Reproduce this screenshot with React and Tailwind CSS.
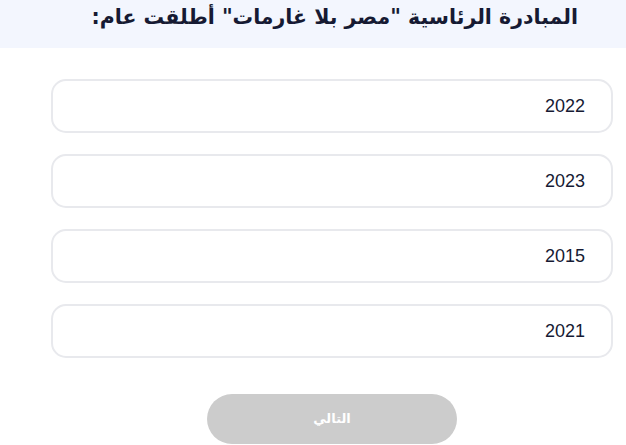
import React, { useState } from 'react';

const options = ['2022', '2023', '2015', '2021'];

const App = () => {
    const [selected, setSelected] = useState(null);

    return (
        <div dir="rtl" className="w-[626px] h-[445px] overflow-hidden bg-white">
            {/* Question */}
            <div className="h-[48px] bg-[#f3f6fe] pr-[48px] pt-[2px]">
                <h2 className="text-[20.5px] font-bold leading-[30px] text-[#161a33] font-['DejaVu_Sans',sans-serif]">
                    المبادرة الرئاسية "مصر بلا غارمات" أطلقت عام:
                </h2>
            </div>

            <div className="pl-[51px] pr-[13px] pt-[31px]">
                {/* Options */}
                <div className="flex flex-col gap-[21px]">
                    {options.map((opt) => (
                        <button
                            key={opt}
                            onClick={() => setSelected(opt)}
                            className={`h-[54px] w-full rounded-[15px] border-2 bg-white px-[26px] text-right text-[18px] text-[#161a33] font-['Liberation_Sans',Arial,sans-serif] ${selected === opt ? 'border-[#2563eb]' : 'border-[#e8e9ed]'}`}
                        >
                            {opt}
                        </button>
                    ))}
                </div>

                {/* Next */}
                <div className="flex justify-center pt-[36px]">
                    <button
                        disabled={!selected}
                        className="h-[50px] w-[250px] rounded-full bg-[#cccccc] text-[13px] font-bold text-white font-['DejaVu_Sans',sans-serif]"
                    >
                        التالي
                    </button>
                </div>
            </div>
        </div>
    );
};

export default App;
